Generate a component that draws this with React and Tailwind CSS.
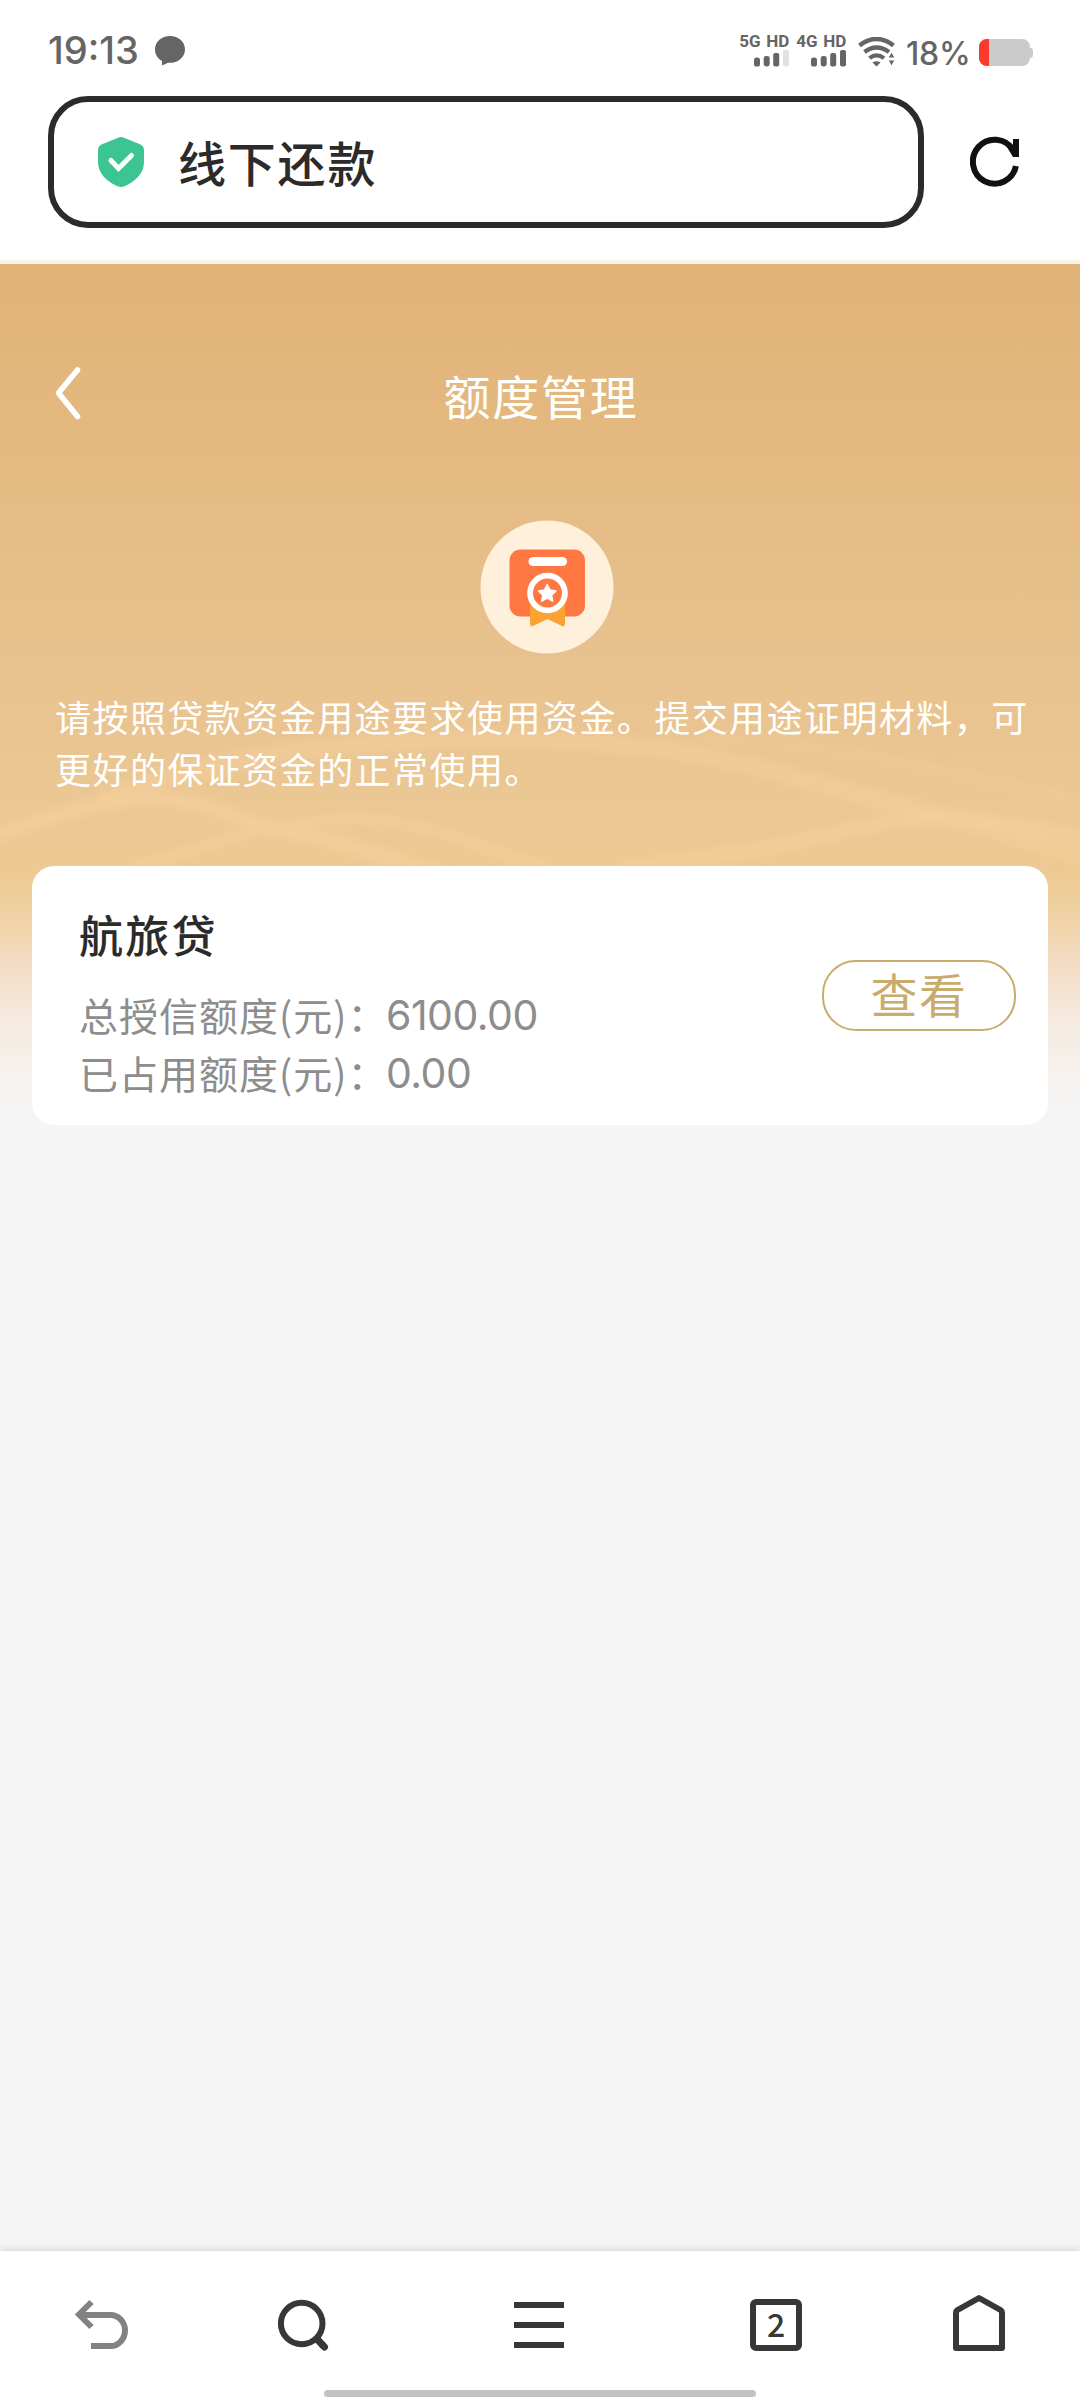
import React from 'react';

const CREDIT_LINES = [
  { label: '总授信额度', amount: '6100.00' },
  { label: '已占用额度', amount: '0.00' },
];

const SignalBars = ({ weakLast }) => (
  <svg width="35" height="17" viewBox="0 0 35 17" fill="#656565">
    <rect x="0" y="7.5" width="6" height="9" rx="2.6" />
    <rect x="9.7" y="6" width="6" height="10.5" rx="2.4" />
    <rect x="19.2" y="3" width="6" height="13.5" rx="2" />
    <rect x="29" y="0" width="6" height="16.5" rx="2" fill={weakLast ? '#e2e2e2' : '#656565'} />
  </svg>
);

const Signal = ({ network, weakLast }) => (
  <div className="flex w-[48px] flex-col items-end">
    <span className="whitespace-nowrap font-['Roboto',sans-serif] text-[17px] leading-[17px] font-bold tracking-[-0.2px] [word-spacing:2px]">
      {network} HD
    </span>
    <SignalBars weakLast={weakLast} />
  </div>
);

const StatusBar = () => (
  <div className="flex h-[96px] items-start justify-between pr-[47px] pl-[48px] font-['Inter',sans-serif] text-[#656565]">
    <div className="flex items-center pt-[32px]">
      <span className="w-[107px] text-[38px] leading-[37px] font-medium">19:13</span>
      <svg width="30" height="30" viewBox="0 0 30 30" fill="#656565">
        <path d="M15 0C6.700 0 0 5.800 0 13.400c0 5 2.800 9.100 7 11.500V29.500l6-2.700c9.700.6 17-5.400 17-13.400C30 5.800 23.300 0 15 0Z" />
      </svg>
    </div>
    <div className="flex items-start">
      <div className="flex gap-[9px] pt-[33px]">
        <Signal network="5G" weakLast />
        <Signal network="4G" />
      </div>
      <svg className="mt-[37px] ml-[12px]" width="38" height="30" viewBox="0 0 38 30" fill="none" stroke="#656565">
        <path d="M1.500 8.500Q18.500 -4.500 35.500 8.500" strokeWidth="4.600" />
        <path d="M6.500 15Q18.500 6 31 15" strokeWidth="4.300" />
        <path d="M11.500 21.200Q18.500 15.500 26 21.200" strokeWidth="4.200" />
        <path d="M14.500 25.500q4-2.600 8 0l-4 4Z" fill="#656565" stroke="none" />
        <path d="M33.500 15l3.600 6h-7.200ZM33.500 29l3.600-6h-7.200Z" fill="#656565" stroke="#fff" strokeWidth="1" />
      </svg>
      <span className="mt-[38px] ml-[10px] w-[73px] text-[32px] leading-[31px] font-medium tracking-[-0.2px]">18%</span>
      <div className="mt-[39px] flex items-center">
        <div className="h-[27px] w-[51px] overflow-hidden rounded-[8px] bg-[#cbcbcb]">
          <div className="h-full w-[10px] bg-[#fb3a2c]" />
        </div>
        <div className="h-[10px] w-[3px] rounded-r-[3px] bg-[#cbcbcb]" />
      </div>
    </div>
  </div>
);

const AddressBar = () => (
  <div className="flex h-[164px] items-start pl-[48px]">
    <div className="flex h-[132px] w-[876px] items-center rounded-[40px] border-[6px] border-[#2b2b2b] pl-[44px]">
      <svg width="46" height="50" viewBox="0 0 46 50">
        <path
          d="M19.500 1Q23 -.8 26.500 1L42 7.200Q46 9 46 13V25C46 37 36.500 45 26.500 49.200Q23 50.600 19.500 49.200C9.500 45 0 37 0 25V13Q0 9 4 7.200Z"
          fill="#3cc593"
        />
        <path d="M13 23.500l7.500 8L33.500 18.500" fill="none" stroke="#fff" strokeWidth="5" strokeLinecap="round" />
      </svg>
      <span className="ml-[34px] pb-[2px] text-[48px] leading-[60px] font-medium tracking-[1.8px] text-[#2b2b2b]">
        线下还款
      </span>
    </div>
    <svg className="mt-[40px] ml-[46px]" width="50" height="52" viewBox="0 0 50 52">
      <path d="M45.900 30A21.700 22 0 1 1 43 14" fill="none" stroke="#111" strokeWidth="6" />
      <path d="M43 3h6v18h-6L37 11l6 1Z" fill="#111" />
    </svg>
  </div>
);

// Soft light ribbons that cross behind the notice text
const Waves = () => (
  <svg className="absolute top-0 left-0" width="1080" height="860" viewBox="0 264 1080 860" fill="none">
    <defs>
      <filter id="soft" x="-10%" y="-40%" width="120%" height="180%">
        <feGaussianBlur stdDeviation="4" />
      </filter>
    </defs>
    <g filter="url(#soft)" stroke="#f8d09c">
      <path d="M-20 840C60 815 100 797 165 800C215 803 240 822 275 829C330 838 370 852 440 875" strokeWidth="14" opacity="0.65" />
      <path d="M130 868C200 850 230 835 275 827C310 820 345 817 380 820C440 826 480 850 550 868" strokeWidth="9" opacity="0.55" />
      <path d="M100 800C220 755 330 742 480 740C620 740 700 750 792 777C870 797 920 812 960 820C1010 833 1050 845 1100 862" strokeWidth="18" opacity="0.5" />
      <path d="M620 868C700 858 760 851 800 841C850 828 890 820 930 818C980 817 1030 828 1100 838" strokeWidth="13" opacity="0.55" />
      <path d="M700 738C840 745 960 775 1100 805" strokeWidth="7" opacity="0.35" />
    </g>
  </svg>
);

const Badge = () => (
  <svg width="134" height="134" viewBox="480 519.500 134 134">
    <circle cx="547" cy="586.500" r="66.500" fill="#fff0db" />
    <rect x="509.500" y="549" width="75.500" height="67" rx="11" fill="#ff7843" />
    <rect x="528.500" y="556.500" width="38.500" height="9" rx="4.500" fill="#fff" />
    <path d="M530 604h35v19q0 4-3.500 2.200L547.500 618.500 533.500 625.200Q530 627 530 623Z" fill="#faa232" />
    <circle cx="547.500" cy="592.500" r="17.400" fill="#ff7843" stroke="#fff" strokeWidth="5.800" />
    <path
      d="M547.200 584l2.700 5.600 6 .8-4.400 4.200 1.200 6.100-5.500-3-5.500 3 1.200-6.100-4.400-4.200 6-.8Z"
      fill="#fff"
      stroke="#fff"
      strokeWidth="1.500"
      strokeLinejoin="round"
    />
  </svg>
);

const CreditCard = () => (
  <div className="relative mx-[32px] mt-[72px] flex h-[259px] items-center justify-between rounded-[22px] bg-white pr-[32px] pl-[47px]">
    <div className="self-start pt-[40px]">
      <h2 className="text-[44px] leading-[56px] font-medium tracking-[2.200px] text-[#2b2b2b]">航旅贷</h2>
      <div className="mt-[23px]">
        {CREDIT_LINES.map((line) => (
          <div key={line.label} className="flex h-[58px] text-[39px] leading-[58px] text-[#8d8d8d]">
            <span className="w-[307px] whitespace-nowrap tracking-[1px]">
              {line.label}(元)：
            </span>
            <span className="font-['Inter',sans-serif] text-[41px] leading-[61px] tracking-[-0.5px]">
              {line.amount}
            </span>
          </div>
        ))}
      </div>
    </div>
    <button className="flex h-[71px] w-[194px] justify-center rounded-[34px] border-2 border-[#c9ab6c] text-[47px] leading-[61px] tracking-[1.500px] text-[#c9ab6c]">
      查看
    </button>
  </div>
);

const BottomNav = () => (
  <div className="relative flex h-[149px] flex-col bg-white shadow-[0_-1px_8px_rgba(0,0,0,0.14)]">
    <div className="flex h-[139px] items-start pt-[43px] pl-[74px]">
      <svg width="56" height="58" viewBox="74 2294 56 58" fill="none" stroke="#828282" strokeWidth="6">
        <path d="M91.500 2302l-12.500 12.500L91.500 2327" />
        <path d="M80 2315h30.500c8 0 14.500 7 14.500 15.500S118.500 2346 110.500 2346H91" />
      </svg>
      <svg className="ml-[147px]" width="54" height="58" viewBox="277 2294 54 58" fill="none" stroke="#373737">
        <ellipse cx="301.700" cy="2323.500" rx="20.800" ry="20.700" strokeWidth="6" />
        <path d="M317 2339l6.500 7" strokeWidth="7" />
        <path d="M323 2345.500l1.500 1.500" strokeWidth="7" strokeLinecap="round" />
      </svg>
      <div className="mt-[8px] ml-[183px] flex w-[50px] flex-col gap-[14px]">
        <div className="h-[6px] bg-[#373737]" />
        <div className="h-[6px] bg-[#373737]" />
        <div className="h-[6px] bg-[#373737]" />
      </div>
      <div className="mt-[5px] ml-[186px] flex h-[52px] w-[52px] items-center justify-center rounded-[6px] border-[6px] border-[#373737] text-[32px] leading-[40px] font-medium text-[#373737]">
        <span className="pb-[5px]">2</span>
      </div>
      <svg className="ml-[150px]" width="54" height="58" viewBox="952 2294 54 58" fill="none" stroke="#373737" strokeWidth="6" strokeLinejoin="round">
        <path d="M956 2313q0-2 1.500-3L979 2298l21.500 12q1.500 1 1.500 3v35H956Z" />
      </svg>
    </div>
    <div className="mx-auto h-[7px] w-[432px] rounded-full bg-[#c2c2c2]" />
  </div>
);

const App = () => {
  return (
    <div className="flex h-[2400px] w-[1080px] flex-col overflow-hidden bg-[#f5f5f5] font-['Noto_Sans_CJK_SC',sans-serif]">
      <header className="border-b-4 border-[#f6f2ec] bg-white">
        <StatusBar />
        <AddressBar />
      </header>

      <main className="relative flex-1">
        <div className="absolute inset-x-0 top-0 h-[846px] bg-[linear-gradient(180deg,#e1b276_0px,#e4ba82_200px,#e8c28f_410px,#ebc894_560px,#edca92_610px,#f0d3a8_660px,#f4dfcb_712px,#f5ebe1_762px,#f5f2ef_812px,#f5f5f5_846px)]" />
        <Waves />
        <div className="relative flex h-[262px] items-center justify-center">
          <svg className="absolute top-[101px] left-[54px]" width="28" height="56" viewBox="0 0 28 56" fill="none" stroke="#fff" strokeWidth="5.600" strokeLinecap="round" strokeLinejoin="round">
            <path d="M23.500 5L4.500 28L23.500 51.500" />
          </svg>
          <h1 className="pl-[2px] text-[47px] leading-[56px] tracking-[1.800px] text-white">额度管理</h1>
        </div>
        <div className="relative -mt-[6px] ml-[480px]">
          <Badge />
        </div>
        <p className="relative mx-[55px] mt-[36px] whitespace-nowrap text-[36px] leading-[52px] tracking-[1.450px] text-white">
          请按照贷款资金用途要求使用资金。提交用途证明材料，可
          <br />
          更好的保证资金的正常使用。
        </p>
        <CreditCard />
      </main>

      <BottomNav />
    </div>
  );
};

export default App;
